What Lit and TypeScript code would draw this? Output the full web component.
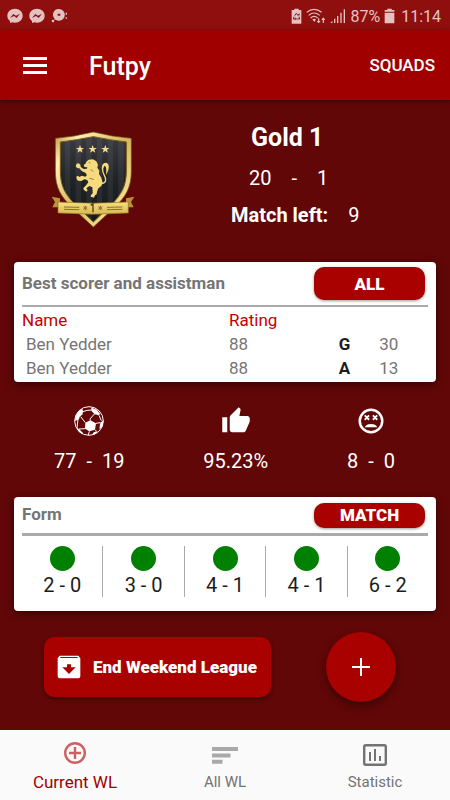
import { LitElement, html, css, svg } from "lit";
import { customElement, state } from "lit/decorators.js";
import { classMap } from "lit/directives/class-map.js";

const messengerIcon = html`<svg width="16" height="16" viewBox="0 0 48 48" aria-hidden="true">
  <path fill="currentColor" fill-rule="evenodd" d="M24 2C11 2 1 11 1 23c0 7 3 12 8 16v6l7-2c3 1 5 1 8 1 13 0 23-9 23-21S37 2 24 2zM9 30l10-12 8 5 12-6-10 13-8-6z"/>
</svg>`;

const chatIcon = html`<svg width="17" height="16" viewBox="0 0 51 48" aria-hidden="true">
  <path fill="currentColor" fill-rule="evenodd" d="M24 3a17 17 0 1 1 0 35c-4 0-7-1-10-3l-4 1 1-4A17 17 0 0 1 24 3zm-4 14v6h8v-6z"/>
  <circle cx="6" cy="39" r="4" fill="currentColor"/>
  <path fill="currentColor" d="M44 14h4v6h-4zM44 28h4v4h-4z"/>
</svg>`;

const recycleBattery = html`<svg width="11" height="16" viewBox="0 0 33 48" aria-hidden="true">
  <path fill="currentColor" d="M2 6h8V2h13v4h8v41H2z"/>
  <path fill="none" stroke="#8f0f0f" stroke-width="3" d="M11 23l5-7 6 7M9 26l-2 7h7M24 26l2 7h-7"/>
  <path fill="#8f0f0f" d="M19 22h7v-6zM13 28v9l5-4z"/>
</svg>`;

const wifiIcon = html`<svg width="20" height="16" viewBox="0 0 60 48" aria-hidden="true">
  <g fill="none" stroke="currentColor" stroke-width="3.500">
    <path d="M2 13Q24-5 47 13M8 22Q24 8 41 22M14 30Q24 20 35 30"/>
    <path d="M38 31v12M52 45V31"/>
  </g>
  <path fill="currentColor" d="M19 34q6-4 11 0l-5 8zM32 39h12l-6 7zM46 36h12l-6-8z"/>
</svg>`;

const signalIcon = html`<svg width="16" height="16" viewBox="0 0 48 48" aria-hidden="true">
  <path fill="currentColor" d="M1 45l6-7v7zM12 45V34l4-3v14zM21 45V24h4v21zM31 45V14h4v31zM41 45V4h4v41z"/>
</svg>`;

const batteryIcon = html`<svg width="11" height="16" viewBox="0 0 33 48" aria-hidden="true">
  <path fill="currentColor" d="M2 6h8V2h13v4h8v5H2zM2 14h29v32H2z"/>
</svg>`;

const menuIcon = html`<svg width="24" height="17" viewBox="0 0 24 17" aria-hidden="true">
  <path fill="currentColor" d="M0 0h24v3H0zM0 7h24v3H0zM0 14h24v3H0z"/>
</svg>`;

const star = (x: number) => svg`<path transform="translate(${x} 88)" fill="#f3dc8b" d="M0-13l3.200 8.800h9.300l-7.500 5.600 2.900 9.100-7.900-5.600-7.900 5.600 2.900-9.100-7.500-5.600h9.300z"/>`;

const badge = html`<svg class="badge" width="84" height="97" viewBox="33 33 252 291" role="img" aria-label="Gold 1 badge">
  <defs>
    <linearGradient id="rim" x1="0" y1="0" x2="1" y2="1">
      <stop offset="0" stop-color="#b8953c"/><stop offset=".18" stop-color="#fff0b4"/>
      <stop offset=".5" stop-color="#d5b75a"/><stop offset=".8" stop-color="#f4dd8e"/><stop offset="1" stop-color="#9a772b"/>
    </linearGradient>
    <linearGradient id="field" x1="0" y1="0" x2="0" y2="1">
      <stop offset="0" stop-color="#3a3b40"/><stop offset=".5" stop-color="#202327"/><stop offset="1" stop-color="#14181a"/>
    </linearGradient>
    <linearGradient id="ribbon" x1="0" y1="0" x2="0" y2="1">
      <stop offset="0" stop-color="#f7df80"/><stop offset="1" stop-color="#d7b951"/>
    </linearGradient>
    <clipPath id="inside"><path d="M61 66Q108 60 160 50q50 10 99 16v88c0 45-16 70-42 97l-57 55-57-55c-26-27-42-52-42-97z"/></clipPath>
  </defs>
  <path fill="#b9933a" d="M35 230l25 5v27H37l8-16zM283 230l-25 5v27h23l-8-16z"/>
  <path fill="url(#rim)" stroke="#6b4d13" stroke-width="2" d="M46 55Q105 50 160 36q55 14 114 19v98c0 51-18 78-49 108l-65 60-65-60c-31-30-49-57-49-108z"/>
  <path fill="url(#field)" stroke="#77571a" stroke-width="3" d="M61 66Q108 60 160 50q50 10 99 16v88c0 45-16 70-42 97l-57 55-57-55c-26-27-42-52-42-97z"/>
  <g clip-path="url(#inside)" fill="#fff" opacity=".06">
    <path d="M75 50h16v260H75zM107 50h16v260h-16zM139 50h16v260h-16zM171 50h16v260h-16zM203 50h16v260h-16zM235 50h16v260h-16z"/>
  </g>
  ${star(120)}${star(158)}${star(196)}
  <g transform="translate(90 90)">
    <path fill="#f5da80" d="M49 35l7-6 13-1 10 6 5 10-2 9 6 9-1 10 7 11 4 15-4 10-9 7-4 10-1 8-5 3-3 7-10-3 1-5 5-5-1-18-9-4-9 7 4 6-4 4-8-6-1-5 9-9 6-8-3-7-9-2-9 5-10-1-4-5-1-7 5-3 4 4 8-4 10 3 5-5-5-7-10-4-8-9-7-1-4-6 3-7 6-1 5 4 1 7 9 6 10-1 1-4-9-1-2-7 5-2z"/>
    <path fill="none" stroke="#f5da80" stroke-width="4" stroke-linecap="round" d="M94 101c15-1 16-13 9-25-8-14-7-32 2-35"/>
    <path fill="#f5da80" d="M96 60c-2-14 4-23 13-22 12 5 8 23-1 37 2-14 1-27-4-27-4 1-3 9-8 12z"/>
    <path fill="none" stroke="#6c5722" stroke-width="2" d="M56 37l5 2M62 59l8 5M58 85l14 3"/>
  </g>
  <path fill="url(#ribbon)" stroke="#927022" stroke-width="2" d="M54 246q106 7 211 0v33q-105 7-211 0z"/>
  <path fill="none" stroke="#8b7032" stroke-width="3" d="M72 261l46 1M72 268l46 1M201 262l46-1M201 269l46-1"/>
  <path fill="none" stroke="#8b7032" stroke-width="3" d="M136 257v14M130 260l12 8M142 260l-12 8M181 257v14M175 260l12 8M187 260l-12 8"/>
  <path fill="none" stroke="#4e3f19" stroke-width="4" d="M152 256l7-5v26"/>
</svg>`;

const ballIcon = html`<svg width="30" height="30" viewBox="0 0 90 90" aria-hidden="true">
  <circle cx="45" cy="45" r="43" fill="none" stroke="currentColor" stroke-width="3"/>
  <g fill="currentColor">
    <path d="M34 50l15-7 17 9-3 19-17 5-13-8z"/>
    <path d="M52 5q16 2 26 18l-3 5-13-3-10-11z"/>
    <path d="M25 8l2 7-1 10-9 7-2 8-12 5Q3 20 25 8z"/>
    <path d="M79 50l9-7q-1 18-7 23l-5 2zM7 66l8 3 12 12-2 4Q12 78 7 66zM59 79l9-3 2 4q-8 6-16 7z"/>
  </g>
  <path fill="none" stroke="currentColor" stroke-width="3" d="M26 17q13-5 27-5M34 50L20 32M49 43l-1-4 14-16M66 52l13-2M63 71l5 5M46 76l-3 11M33 68l-18 1M75 28l7 16M12 38l-3 28"/>
</svg>`;

const thumbIcon = html`<svg width="30" height="30" viewBox="0 0 24 24" aria-hidden="true">
  <path fill="currentColor" d="M1 21h4V9H1v12zm22-11c0-1.100-.9-2-2-2h-6.310l.95-4.570.03-.32c0-.41-.17-.79-.44-1.060L14.170 1 7.590 7.590C7.220 7.950 7 8.450 7 9v10c0 1.100.9 2 2 2h9c.83 0 1.540-.5 1.840-1.220l3.020-7.050c.09-.23.14-.47.14-.73v-2z"/>
</svg>`;

const sadIcon = html`<svg width="30" height="30" viewBox="0 0 24 24" aria-hidden="true">
  <circle cx="12" cy="12" r="9" fill="none" stroke="currentColor" stroke-width="2"/>
  <path fill="none" stroke="currentColor" stroke-width="1.500" d="M7 7.500l3.500 3.500M10.500 7.500L7 11M13.500 7.500L17 11M17 7.500L13.500 11"/>
  <path fill="currentColor" d="M6.900 17a5.400 4 0 0 1 10.200 0z"/>
</svg>`;

const archiveIcon = html`<svg width="24" height="24" viewBox="0 0 72 72" aria-hidden="true">
  <path fill="currentColor" fill-rule="evenodd" d="M8 2h56l6 8v54q0 6-6 6H8q-6 0-6-6V10zm3 4L9 9h54l-2-3zM30 28v9H16l20 20 20-20H42v-9z"/>
</svg>`;

const plusIcon = html`<svg width="18" height="18" viewBox="0 0 18 18" aria-hidden="true">
  <path fill="currentColor" d="M8 0h2v8h8v2h-8v8H8v-8H0V8h8z"/>
</svg>`;

const navIcons = {
  current: html`<svg width="22" height="22" viewBox="0 0 22 22" aria-hidden="true">
    <circle cx="11" cy="11" r="9.800" fill="none" stroke="currentColor" stroke-width="2.400"/>
    <path stroke="currentColor" stroke-width="2.400" d="M11 5v12M5 11h12"/>
  </svg>`,
  all: html`<svg width="26" height="17" viewBox="0 0 26 17" aria-hidden="true">
    <path fill="currentColor" d="M0 0h26v4H0zM0 6.500h18.500v4H0zM0 12.700h10.500v4H0z"/>
  </svg>`,
  stats: html`<svg width="24" height="22" viewBox="0 0 24 22" aria-hidden="true">
    <rect x="1.200" y="1.200" width="21.600" height="19.600" rx="1.500" fill="none" stroke="currentColor" stroke-width="2.400"/>
    <path stroke="currentColor" stroke-width="2" d="M7 8v9M12 5v12M17 12v5"/>
  </svg>`,
};

type Tab = keyof typeof navIcons;

@customElement("app-root")
export class AppRoot extends LitElement {
  @state() private tab: Tab = "current";

  private players = [
    { name: "Ben Yedder", rating: 88, kind: "G", count: 30 },
    { name: "Ben Yedder", rating: 88, kind: "A", count: 13 },
  ];
  private form = ["2 - 0", "3 - 0", "4 - 1", "4 - 1", "6 - 2"];
  private tabs: { id: Tab; label: string }[] = [
    { id: "current", label: "Current WL" },
    { id: "all", label: "All WL" },
    { id: "stats", label: "Statistic" },
  ];

  static styles = css`
    :host {
      display: flex;
      flex-direction: column;
      min-height: 100vh;
      background: #610707;
      color: #fff;
      font-family: Roboto, "Noto Sans", sans-serif;
      font-size: 17px;
    }
    * { box-sizing: border-box; }
    svg { display: block; flex: none; }
    h1, h2, p, ul { margin: 0; padding: 0; }
    button { border: 0; padding: 0; background: none; color: inherit; font: inherit; cursor: pointer; }
    .status {
      display: flex;
      justify-content: space-between;
      align-items: center;
      height: 30px;
      padding: 2px 9px 0 7px;
      background: #8f0f0f;
      color: #e5c2c2;
      font-size: 16px;
    }
    .status-group { display: flex; align-items: center; }
    .notices { gap: 6px; }
    .system { gap: 4px; }
    .clock { margin-left: 2px; }
    .appbar {
      display: flex;
      align-items: center;
      height: 70px;
      padding: 0 15px 0 23px;
      background: #a00000;
      box-shadow: 0 1px 4px rgba(0, 0, 0, 0.5);
    }
    .title { margin-left: 42px; padding-top: 2px; font-size: 25px; font-weight: 500; }
    .squads { margin-left: auto; font-weight: 500; }
    main { flex: 1; }
    .hero { display: flex; padding: 18px 51px 0; }
    .badge { margin-top: 13px; }
    .summary { margin-left: 96px; white-space: nowrap; }
    .rank { padding-left: 20px; font-size: 25px; line-height: 40px; font-weight: 700; }
    .record { display: flex; gap: 20px; padding-left: 18px; font-size: 20px; line-height: 40px; }
    .left { display: flex; gap: 20px; font-size: 20px; line-height: 34px; }
    .card {
      margin: 0 14px;
      padding: 0 8px;
      border-radius: 4px;
      background: #fff;
      color: #757575;
      box-shadow: 0 2px 8px rgba(0, 0, 0, 0.5);
    }
    .scorers { margin-top: 30px; padding-bottom: 2px; }
    .card-head {
      display: flex;
      justify-content: space-between;
      align-items: center;
      padding-right: 3px;
      box-sizing: content-box;
    }
    .scorers .card-head { height: 43px; border-bottom: 2px solid #aaa; }
    .form .card-head { height: 36px; border-bottom: 3px solid #aaa; }
    .card-title { padding-bottom: 2px; font-size: 17px; line-height: 24px; font-weight: 700; }
    .pill {
      width: 111px;
      height: 33px;
      border-radius: 10px;
      background: #a90000;
      color: #fff;
      font-weight: 900;
      box-shadow: 0 1px 3px rgba(0, 0, 0, 0.4);
    }
    .form .pill { height: 25px; }
    table { width: 100%; margin-top: 1px; border-collapse: collapse; table-layout: fixed; }
    th, td { height: 24px; padding: 0; line-height: 24px; text-align: left; font-weight: 400; }
    th { color: #c60000; }
    td:first-child { padding-left: 4px; }
    .kind { color: #1c1c1c; font-weight: 700; }
    .col-name { width: 51%; }
    .col-rating { width: 27%; }
    .col-kind { width: 10%; }
    .totals { display: flex; justify-content: space-between; margin: 24px 55px 23px 54px; }
    .total { display: flex; flex-direction: column; align-items: center; gap: 12px; font-size: 20px; line-height: 26px; }
    .pair { display: flex; gap: 10px; }
    .matches { display: flex; padding: 10px 0 14px; list-style: none; }
    .match {
      flex: 1;
      display: flex;
      flex-direction: column;
      align-items: center;
      height: 51px;
      color: #1c1c1c;
      font-size: 20px;
      line-height: 28px;
    }
    .match + .match { border-left: 1px solid #aaa; }
    .dot { flex: none; width: 25px; height: 25px; border-radius: 50%; background: #008000; }
    .actions { display: flex; justify-content: space-between; align-items: center; padding: 21px 54px 28px 44px; }
    .end {
      display: flex;
      align-items: center;
      gap: 12px;
      height: 60px;
      padding: 0 14px 0 13px;
      border-radius: 10px;
      background: #a90000;
      font-weight: 900;
      box-shadow: 0 2px 4px rgba(0, 0, 0, 0.4);
    }
    .fab {
      display: grid;
      place-items: center;
      width: 70px;
      height: 70px;
      border-radius: 50%;
      background: #a90000;
      box-shadow: 0 4px 8px rgba(0, 0, 0, 0.4);
    }
    nav { display: flex; height: 70px; background: #fafafa; color: #737373; }
    .tab { flex: 1 1 0; display: flex; flex-direction: column; align-items: center; padding-top: 10px; font-size: 15px; }
    .tab-icon { display: grid; place-items: center; height: 30px; }
    .tab-label { line-height: 24px; }
    .tab.all .tab-icon { color: #a9a9a9; }
    .tab.active { color: #a00000; font-size: 17px; }
    .tab.active .tab-icon { color: #ca6262; height: 26px; }
    .tab.active .tab-label { line-height: 32px; }
  `;

  render() {
    return html`
      <div class="status">
        <div class="status-group notices">${messengerIcon}${messengerIcon}${chatIcon}</div>
        <div class="status-group system">
          ${recycleBattery}${wifiIcon}${signalIcon}<span>87%</span>${batteryIcon}<span class="clock">11:14</span>
        </div>
      </div>
      <header class="appbar">
        <button aria-label="Menu">${menuIcon}</button>
        <h1 class="title">Futpy</h1>
        <button class="squads">SQUADS</button>
      </header>
      <main>
        <section class="hero">
          ${badge}
          <div class="summary">
            <h2 class="rank">Gold 1</h2>
            <p class="record"><span>20</span><span>-</span><span>1</span></p>
            <p class="left"><b>Match left:</b><span>9</span></p>
          </div>
        </section>
        <section class="card scorers">
          <div class="card-head">
            <h2 class="card-title">Best scorer and assistman</h2>
            <button class="pill">ALL</button>
          </div>
          <table>
            <colgroup><col class="col-name"><col class="col-rating"><col class="col-kind"><col></colgroup>
            <thead><tr><th>Name</th><th>Rating</th><th></th><th></th></tr></thead>
            <tbody>
              ${this.players.map((p) => html`<tr><td>${p.name}</td><td>${p.rating}</td><td class="kind">${p.kind}</td><td>${p.count}</td></tr>`)}
            </tbody>
          </table>
        </section>
        <section class="totals">
          <div class="total">${ballIcon}<div class="pair"><span>77</span><span>-</span><span>19</span></div></div>
          <div class="total">${thumbIcon}<span>95.23%</span></div>
          <div class="total">${sadIcon}<div class="pair"><span>8</span><span>-</span><span>0</span></div></div>
        </section>
        <section class="card form">
          <div class="card-head">
            <h2 class="card-title">Form</h2>
            <button class="pill">MATCH</button>
          </div>
          <ul class="matches">
            ${this.form.map((score) => html`<li class="match"><span class="dot"></span><span>${score}</span></li>`)}
          </ul>
        </section>
        <section class="actions">
          <button class="end">${archiveIcon}<span>End Weekend League</span></button>
          <button class="fab" aria-label="Add match">${plusIcon}</button>
        </section>
      </main>
      <nav>
        ${this.tabs.map(
          (t) => html`<button
            class=${classMap({ tab: true, active: this.tab === t.id, [t.id]: true })}
            @click=${() => (this.tab = t.id)}
          ><span class="tab-icon">${navIcons[t.id]}</span><span class="tab-label">${t.label}</span></button>`
        )}
      </nav>
    `;
  }
}
